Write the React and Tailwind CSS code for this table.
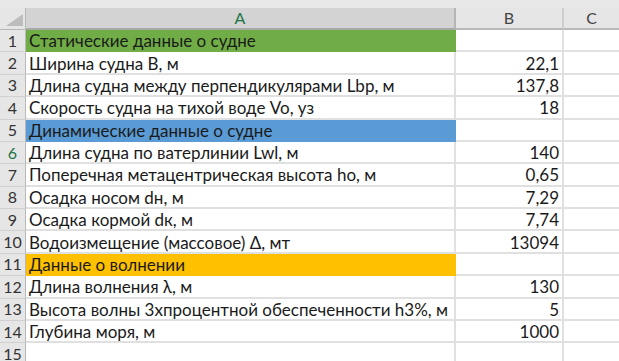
const rows = [
  { n: 1, label: 'Статические данные о судне', fill: 'bg-[#70ad47] border-[#70ad47]' },
  { n: 2, label: 'Ширина судна B, м', value: '22,1' },
  { n: 3, label: 'Длина судна между перпендикулярами Lbp, м', value: '137,8' },
  { n: 4, label: 'Скорость судна на тихой воде Vo, уз', value: '18' },
  { n: 5, label: 'Динамические данные о судне', fill: 'bg-[#5b9bd5] border-[#5b9bd5]' },
  { n: 6, label: 'Длина судна по ватерлинии Lwl, м', value: '140' },
  { n: 7, label: 'Поперечная метацентрическая высота ho, м', value: '0,65' },
  { n: 8, label: 'Осадка носом dн, м', value: '7,29' },
  { n: 9, label: 'Осадка кормой dк, м', value: '7,74' },
  { n: 10, label: 'Водоизмещение (массовое) Δ, мт', value: '13094' },
  { n: 11, label: 'Данные о волнении', fill: 'bg-[#ffc000] border-[#ffc000]' },
  { n: 12, label: 'Длина волнения λ, м', value: '130' },
  { n: 13, label: 'Высота волны 3хпроцентной обеспеченности h3%, м', value: '5' },
  { n: 14, label: 'Глубина моря, м', value: '1000' },
  { n: 15, label: '' },
];

function Row({ n, label, value, fill }) {
  return (
    <div className="grid grid-cols-[26px_430px_108px_1fr] h-[22.38px]">
      <div
        className={`flex items-center justify-center text-[16px] bg-[#e6e6e6] border-r border-b border-r-[#b8b8b8] border-b-[#d0d0d0] ${
          n === 6 ? 'text-[#217346]' : 'text-[#333]'
        }`}
      >
        {n}
      </div>
      <div
        className={`flex items-center pl-[3px] pt-px whitespace-nowrap border-r-2 border-b-2 ${
          fill ? fill : 'border-[#e0e0e0]'
        }`}
      >
        {label}
      </div>
      <div className="flex items-center justify-end pr-[3px] pt-px border-r-2 border-b-2 border-[#e0e0e0]">
        {value}
      </div>
      <div className="border-b-2 border-[#e0e0e0]" />
    </div>
  );
}

export default function App() {
  return (
    <div className="w-[619px] h-[361px] overflow-hidden bg-white text-[#1a1a1a] text-[17px] leading-none font-['Lato','Noto_Sans',sans-serif]">
      <div className="h-2 bg-[#e8e8e8]" />

      {/* column headers */}
      <div className="grid grid-cols-[26px_430px_108px_1fr] h-[22px] text-[16px] text-[#444]">
        <div className="relative bg-[#e6e6e6] border-r border-b border-[#b8b8b8]">
          <svg className="absolute right-[2px] bottom-[3px]" width="17" height="12" viewBox="0 0 17 12">
            <polygon points="17,0 17,12 0,12" fill="#bcbcbc" />
          </svg>
        </div>
        <div className="flex items-center justify-center bg-[#d3d3d3] border-r-2 border-b-2 border-r-[#b4b4b4] border-b-[#a8a8a8] text-[#217346]">
          A
        </div>
        <div className="flex items-center justify-center bg-[#e6e6e6] border-r-2 border-b-2 border-r-[#cdcdcd] border-b-[#b8b8b8]">
          B
        </div>
        <div className="flex items-center justify-center bg-[#e6e6e6] border-b-2 border-[#b8b8b8]">
          C
        </div>
      </div>

      {rows.map((r) => (
        <Row key={r.n} {...r} />
      ))}
    </div>
  );
}
